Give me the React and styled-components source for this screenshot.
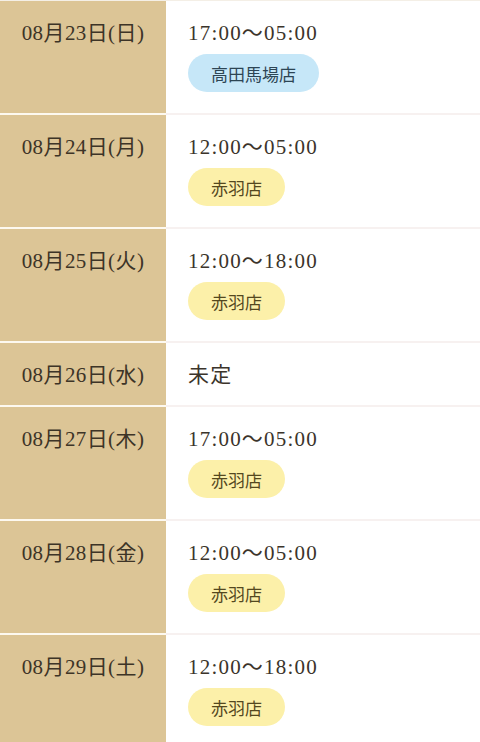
import React from 'react'
import styled, { createGlobalStyle } from 'styled-components';

const GlobalStyle = createGlobalStyle`
  body {
    margin: 0;
    background: #ffffff;
    font-family: "Liberation Serif", "Noto Sans CJK JP", serif;
    color: #3b342b;
  }
`;

const schedule = [
  { date: "08月23日(日)", time: "17:00〜05:00", shop: "高田馬場店", kind: "blue" },
  { date: "08月24日(月)", time: "12:00〜05:00", shop: "赤羽店", kind: "yellow" },
  { date: "08月25日(火)", time: "12:00〜18:00", shop: "赤羽店", kind: "yellow" },
  { date: "08月26日(水)", time: "未定" },
  { date: "08月27日(木)", time: "17:00〜05:00", shop: "赤羽店", kind: "yellow" },
  { date: "08月28日(金)", time: "12:00〜05:00", shop: "赤羽店", kind: "yellow" },
  { date: "08月29日(土)", time: "12:00〜18:00", shop: "赤羽店", kind: "yellow" },
];

const App = () => {
  return (
    <>
      <GlobalStyle />
      <StTable>
        {schedule.map((item) => (
          <StRow key={item.date}>
            <StDate>{item.date}</StDate>
            <StInfo>
              <StTime>{item.time}</StTime>
              {item.shop && <StBadge $kind={item.kind}>{item.shop}</StBadge>}
            </StInfo>
          </StRow>
        ))}
      </StTable>
    </>
  )
}

const StTable = styled.div`
  display: flex;
  flex-direction: column;
  width: 480px;
  border-top: 1px solid #f4efe6;
`;

const StRow = styled.div`
  display: grid;
  grid-template-columns: 166px 1fr;
  border-bottom: 2px solid #f7f1f0;

  &:last-child {
    border-bottom: none;
  }
`;

const StDate = styled.div`
  background-color: #dcc596;
  box-shadow: 0 2px 0 #fdf9f0;
  padding: 19px 0 0 0;
  text-align: center;
  font-size: 21px;
  line-height: 26px;
  letter-spacing: 0.4px;
  color: #3d3427;
`;

const StInfo = styled.div`
  display: flex;
  flex-direction: column;
  align-items: flex-start;
  gap: 8px;
  padding: 19px 0 17px 22px;
`;

const StTime = styled.div`
  font-size: 21px;
  line-height: 26px;
  letter-spacing: 1.2px;
  color: #3b342b;
`;

const StBadge = styled.div`
  height: 38px;
  display: flex;
  align-items: center;
  padding: 0 23px;
  border-radius: 19px;
  font-size: 17px;
  background-color: ${(p) => (p.$kind === "blue" ? "#c6e7f8" : "#fcf0a9")};
  color: ${(p) => (p.$kind === "blue" ? "#2d4554" : "#54481f")};
  margin-bottom: 4px;
`;

export default App
